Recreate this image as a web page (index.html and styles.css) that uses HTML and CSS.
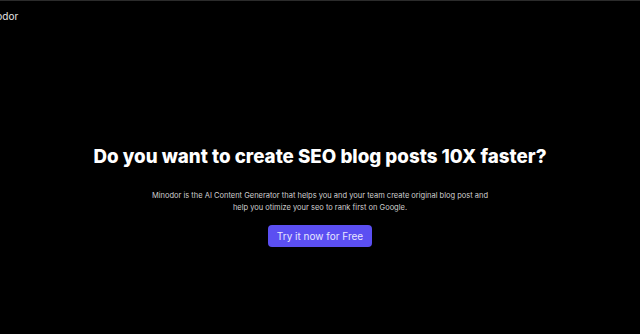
FILE: index.html
```html
<!DOCTYPE html>
<html lang="en">
<head>
<meta charset="utf-8">
<title>Minodor</title>
<link rel="stylesheet" href="styles.css">
</head>
<body>
<div class="page">
  <header class="header">
    <span class="logo">Minodor</span>
    <button class="login">Login</button>
  </header>
  <main class="hero">
    <h1 class="title">Do you want to create SEO blog posts 10X faster?</h1>
    <p class="lead">Minodor is the AI Content Generator that helps you and your team create original blog post and<br>help you otimize your seo to rank first on Google.</p>
    <a class="cta" href="#">Try it now for Free</a>
  </main>
</div>
</body>
</html>
```
FILE: styles.css
```css
html, body {
  margin: 0;
  padding: 0;
  background: #000;
  overflow: hidden;
}
body {
  font-family: Inter, "Noto Sans", sans-serif;
  color: #fff;
}
.page {
  height: 334px;
  border-top: 1px solid #2b2b2b;
  box-sizing: border-box;
  display: flex;
  flex-direction: column;
}
.header {
  display: flex;
  justify-content: space-between;
  align-items: center;
  margin: 0 -60px 0 -21px;
  height: 28px;
}
.logo {
  font-size: 10px;
  color: #e6e6e6;
  margin-top: 1px;
}
.login {
  background: transparent;
  border: 1px solid #5a5a5a;
  border-radius: 4px;
  color: #ddd;
  font-family: inherit;
  font-size: 9px;
  height: 18px;
  width: 60px;
  margin-top: 1px;
  padding: 0;
}
.hero {
  display: flex;
  flex-direction: column;
  align-items: center;
  padding-top: 117px;
}
.title {
  margin: 0;
  font-size: 18.75px;
  font-weight: 800;
  line-height: 22px;
  color: #fff;
}
.lead {
  margin: 22px 0 0;
  font-size: 7.5px;
  line-height: 12px;
  color: #d0d0d0;
  text-align: center;
}
.cta {
  margin-top: 11px;
  display: block;
  width: 104px;
  height: 22px;
  line-height: 22px;
  text-align: center;
  background: #5b4ff2;
  color: #e8e6ff;
  border-radius: 4px;
  font-size: 10px;
  text-decoration: none;
}
```
